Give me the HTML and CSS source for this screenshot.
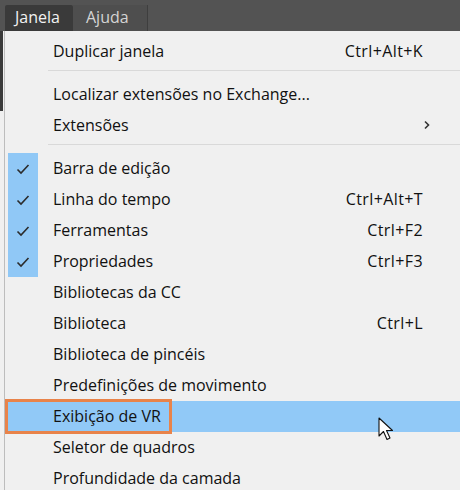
FILE: index.html
```html
<!DOCTYPE html>
<html lang="pt">
<head>
<meta charset="utf-8">
<link rel="stylesheet" href="styles.css">
</head>
<body>
<div class="menubar">
  <div class="tab active">Janela</div>
  <div class="tab">Ajuda</div>
</div>
<div class="below">
  <div class="strip"><div class="strip-dark"></div></div>
  <div class="menu">
    <div class="row"><span class="chk"></span><span class="lbl">Duplicar janela</span><span class="key">Ctrl+Alt+K</span></div>
    <div class="sep"></div>
    <div class="row"><span class="chk"></span><span class="lbl">Localizar extensões no Exchange...</span><span class="key"></span></div>
    <div class="row"><span class="chk"></span><span class="lbl">Extensões</span><span class="key arrow"><svg width="8" height="12" viewBox="0 0 8 12"><path d="M2 2.5 L5.5 6 L2 9.5" fill="none" stroke="#333" stroke-width="1.6"/></svg></span></div>
    <div class="sep"></div>
    <div class="row"><span class="chk on"><svg width="14" height="12" viewBox="0 0 14 12"><path d="M1.5 6.5 L5 10 L12.5 2" fill="none" stroke="#2b2b2b" stroke-width="1.6"/></svg></span><span class="lbl">Barra de edição</span><span class="key"></span></div>
    <div class="row"><span class="chk on"><svg width="14" height="12" viewBox="0 0 14 12"><path d="M1.5 6.5 L5 10 L12.5 2" fill="none" stroke="#2b2b2b" stroke-width="1.6"/></svg></span><span class="lbl">Linha do tempo</span><span class="key">Ctrl+Alt+T</span></div>
    <div class="row"><span class="chk on"><svg width="14" height="12" viewBox="0 0 14 12"><path d="M1.5 6.5 L5 10 L12.5 2" fill="none" stroke="#2b2b2b" stroke-width="1.6"/></svg></span><span class="lbl">Ferramentas</span><span class="key">Ctrl+F2</span></div>
    <div class="row"><span class="chk on"><svg width="14" height="12" viewBox="0 0 14 12"><path d="M1.5 6.5 L5 10 L12.5 2" fill="none" stroke="#2b2b2b" stroke-width="1.6"/></svg></span><span class="lbl">Propriedades</span><span class="key">Ctrl+F3</span></div>
    <div class="row"><span class="chk"></span><span class="lbl">Bibliotecas da CC</span><span class="key"></span></div>
    <div class="row"><span class="chk"></span><span class="lbl">Biblioteca</span><span class="key">Ctrl+L</span></div>
    <div class="row"><span class="chk"></span><span class="lbl">Biblioteca de pincéis</span><span class="key"></span></div>
    <div class="row"><span class="chk"></span><span class="lbl">Predefinições de movimento</span><span class="key"></span></div>
    <div class="row hot"><span class="chk"></span><span class="lbl">Exibição de VR</span><span class="key"></span>
      <span class="callout"></span>
      <svg class="cursor" width="20" height="27" viewBox="0 0 20 27"><path d="M1 1 L1 19 L5.5 14.5 L9 22.5 L12 21 L8.5 13.5 L14.5 13.5 Z" fill="#fff" stroke="#111" stroke-width="1.1" stroke-linejoin="round"/></svg>
    </div>
    <div class="row"><span class="chk"></span><span class="lbl">Seletor de quadros</span><span class="key"></span></div>
    <div class="row"><span class="chk"></span><span class="lbl">Profundidade da camada</span><span class="key"></span></div>
  </div>
</div>
</body>
</html>
```
FILE: styles.css
```css
html, body {
  margin: 0;
  padding: 0;
  width: 460px;
  height: 490px;
  overflow: hidden;
  background: #f0f0f0;
  font-family: "Open Sans", "Noto Sans", sans-serif;
}
.menubar {
  height: 31px;
  background: #535353;
  display: flex;
  align-items: flex-end;
  padding-left: 5px;
  box-sizing: border-box;
}
.tab {
  height: 26px;
  box-sizing: border-box;
  font-size: 16px;
  line-height: 25px;
}
.tab.active {
  width: 68px;
  padding-left: 10px;
  background: #3a3a3a;
  color: #f2f2f2;
  border-radius: 2px 2px 0 0;
}
.tab:not(.active) {
  width: 75px;
  padding-left: 13px;
  background: #4e4e4e;
  color: #d4d4d4;
  border-right: 1px solid #3e3e3e;
}
.below {
  display: flex;
}
.strip {
  width: 4px;
  flex: none;
}
.strip-dark {
  height: 80px;
  width: 3px;
  background: #3a3a3a;
}
.menu {
  flex: 1;
  background: #f0f0f0;
  border-left: 1px solid #bdbdbd;
  padding-top: 5px;
  font-size: 16px;
  color: #111;
}
.row {
  position: relative;
  height: 31px;
  box-sizing: border-box;
  padding: 0 37px 2px 3px;
  display: grid;
  grid-template-columns: 30px 1fr auto;
  align-items: center;
}
.chk {
  align-self: stretch;
  margin-bottom: -2px;
  display: flex;
  align-items: center;
  justify-content: center;
}
.chk.on {
  background: #90c8f6;
}
.lbl {
  padding-left: 15px;
  white-space: nowrap;
}
.key {
  text-align: right;
  white-space: nowrap;
  letter-spacing: 0.4px;
}
.arrow {
  display: flex;
  align-items: center;
  margin-right: -12px;
}
.sep {
  height: 1px;
  background: #d9d9d9;
  margin: 3px 0 8px 43px;
}
.hot {
  background: #91c9f7;
}
.callout {
  position: absolute;
  left: 0;
  top: -2px;
  width: 167px;
  height: 35px;
  box-sizing: border-box;
  border: 3px solid #e8834a;
}
.cursor {
  position: absolute;
  left: 373px;
  top: 16px;
}
```
